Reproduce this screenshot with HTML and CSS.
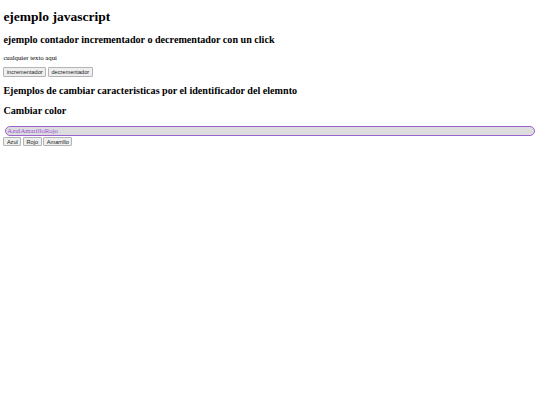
FILE: index.html
```html
<!DOCTYPE html>
<html lang="es">
<head>
<meta charset="utf-8">
<title>ejemplo javascript</title>
<link rel="stylesheet" href="styles.css">
</head>
<body>
<h1>ejemplo javascript</h1>
<h2>ejemplo contador incrementador o decrementador con un click</h2>
<p id="texto">cualquier texto aqui</p>
<button>incrementador</button>
<button>decrementador</button>
<h2>Ejemplos de cambiar caracteristicas por el identificador del elemnto</h2>
<h2>Cambiar color</h2>
<div id="caja" class="caja">AzulAmarilloRojo</div>
<button>Azul</button>
<button>Rojo</button>
<button>Amarrillo</button>
</body>
</html>
```

FILE: styles.css
```css
/* compact page: everything sized at 0.42 of the usual defaults */
body {
  margin: 3.375px;
  font-family: "Liberation Serif", serif;
  font-size: 6.75px;
}

h1 {
  font-size: 13.5px;
  margin: 5.9px 0 0.67em;
}

h2 {
  font-size: 10.125px;
  margin: 0.83em 0;
}

p {
  margin: 1em 0;
}

button {
  font-family: "Liberation Sans", sans-serif;
  font-size: 5.625px;
  color: #222;
  background: #efefef;
  border: 1px solid #b4b4b4;
  border-radius: 1px;
  padding: 0.7px 2.5px;
  margin: 0;
}

.caja {
  margin: 10px 1.7px 1.5px;
  padding: 0 1.3px;
  background: #dddddd;
  color: #9b4fd6;
  border: 1.3px solid #9b63d0;
  border-radius: 9px;
  line-height: 8px;
}
```
